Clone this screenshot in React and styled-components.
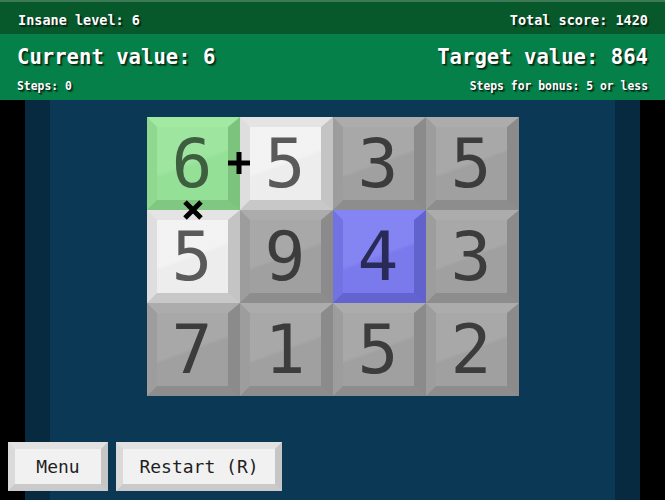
import React from 'react';
import styled, { createGlobalStyle } from 'styled-components';

const GlobalStyle = createGlobalStyle`
    html, body {
        margin: 0;
        padding: 0;
        background: #000;
    }
    body {
        font-family: "DejaVu Sans Mono", "Liberation Mono", monospace;
    }
`;

const palette = {
    grey: { face: '#a3a3a3', top: '#acacac', left: '#9d9d9d', right: '#8b8b8b', bottom: '#8d8d8d', digit: '#3c3c3c' },
    white: { face: '#f2f2f2', top: '#e4e4e4', left: '#dedede', right: '#c4c4c4', bottom: '#c8c8c8', digit: '#5a5a5a' },
    green: { face: '#98e49a', top: '#a2eaa2', left: '#90d890', right: '#7cc47e', bottom: '#80c882', digit: '#3e5e40' },
    blue: { face: '#7c7cf2', top: '#8484f4', left: '#7272e2', right: '#6262cc', bottom: '#6464d0', digit: '#2a2a56' },
};

const cells = [
    { v: 6, kind: 'green' }, { v: 5, kind: 'white' }, { v: 3 }, { v: 5 },
    { v: 5, kind: 'white' }, { v: 9 }, { v: 4, kind: 'blue' }, { v: 3 },
    { v: 7 }, { v: 1 }, { v: 5 }, { v: 2 },
];

const PlusIcon = () => (
    <svg width="24" height="24" viewBox="0 0 24 24">
        <path d="M12 1 V23 M1 12 H23" stroke="#000" strokeWidth="5" />
    </svg>
);

const CrossIcon = () => (
    <svg width="20" height="20" viewBox="0 0 20 20">
        <path d="M2 2 L18 18 M18 2 L2 18" stroke="#000" strokeWidth="5" />
    </svg>
);

const App = () => {
    return (
        <Page>
            <GlobalStyle />
            <TopBar>
                <SmallTitle>Insane level: 6</SmallTitle>
                <SmallTitle>Total score: 1420</SmallTitle>
            </TopBar>
            <Panel>
                <Row>
                    <BigTitle>Current value: 6</BigTitle>
                    <BigTitle>Target value: 864</BigTitle>
                </Row>
                <Row>
                    <Tiny>Steps: 0</Tiny>
                    <Tiny>Steps for bonus: 5 or less</Tiny>
                </Row>
            </Panel>
            <Body>
                <Edge />
                <Field>
                    <Grid>
                        {cells.map((c, i) => (
                            <Tile key={i} $c={palette[c.kind || 'grey']}>
                                <Face $c={palette[c.kind || 'grey']}>{c.v}</Face>
                                {i === 0 && <Operator $x={70} $y={24}><PlusIcon /></Operator>}
                                {i === 0 && <Operator $x={26} $y={73}><CrossIcon /></Operator>}
                            </Tile>
                        ))}
                    </Grid>
                </Field>
                <Edge />
            </Body>
            <Footer>
                <Button $w={100}><ButtonFace>Menu</ButtonFace></Button>
                <Button $w={166}><ButtonFace>Restart (R)</ButtonFace></Button>
            </Footer>
        </Page>
    );
};

const Page = styled.div`
    position: relative;
    width: 665px;
    height: 500px;
    overflow: hidden;
    background: #000;
    display: flex;
    flex-direction: column;
`;

const TopBar = styled.div`
    height: 34px;
    box-sizing: border-box;
    padding: 4px 17px 0 18px;
    background: #07592c;
    border-top: 2px solid #3d7a55;
    display: flex;
    align-items: center;
    justify-content: space-between;
`;

const shadow = `text-shadow: 1px 1px 0 #0a2a15, 2px 2px 1px rgba(0,0,0,0.5);`;

const SmallTitle = styled.span`
    color: #fff;
    font-size: 13.5px;
    font-weight: bold;
    ${shadow}
`;

const Panel = styled.div`
    height: 66px;
    box-sizing: border-box;
    background: #058049;
    padding: 7px 17px 0 17px;
    display: flex;
    flex-direction: column;
`;

const Row = styled.div`
    display: flex;
    justify-content: space-between;
    align-items: center;
`;

const BigTitle = styled.span`
    color: #fff;
    font-size: 20.6px;
    font-weight: bold;
    line-height: 32px;
    ${shadow}
`;

const Tiny = styled.span`
    color: #fff;
    font-size: 11.4px;
    font-weight: bold;
    line-height: 26px;
    ${shadow}
`;

const Body = styled.div`
    flex: 1;
    display: flex;
    padding: 0 25px;
`;

const Edge = styled.div`
    width: 25px;
    background: #082a40;
`;

const Field = styled.div`
    flex: 1;
    background: #0b3955;
    display: flex;
    justify-content: center;
    padding-top: 17px;
`;

const Grid = styled.div`
    display: grid;
    grid-template-columns: repeat(4, 93px);
    grid-template-rows: repeat(3, 93px);
    align-self: flex-start;
`;

const Tile = styled.div`
    position: relative;
    box-sizing: border-box;
    border: 10px solid;
    border-top-color: ${p => p.$c.top};
    border-left-color: ${p => p.$c.left};
    border-right-color: ${p => p.$c.right};
    border-bottom-color: ${p => p.$c.bottom};
    border-right-width: 12px;
    background: ${p => p.$c.face};
`;

const Face = styled.div`
    width: 100%;
    height: 100%;
    display: flex;
    align-items: center;
    justify-content: center;
    font-size: 68px;
    line-height: 1;
    color: ${p => p.$c.digit};
    background: linear-gradient(160deg, rgba(255,255,255,0.06) 0%, rgba(255,255,255,0.06) 48%, rgba(0,0,0,0.02) 52%, rgba(0,0,0,0.02) 100%);
`;

const Operator = styled.div`
    position: absolute;
    z-index: 2;
    left: ${p => p.$x}px;
    top: ${p => p.$y}px;
    line-height: 0;
`;

const Footer = styled.div`
    position: absolute;
    left: 8px;
    top: 442px;
    display: flex;
    gap: 8px;
`;

const Button = styled.div`
    width: ${p => p.$w}px;
    height: 49px;
    box-sizing: border-box;
    border: 7px solid;
    border-top-color: #e2e2e2;
    border-left-color: #dadada;
    border-right-color: #c6c6c6;
    border-bottom-color: #cacaca;
    background: #f1f1f1;
`;

const ButtonFace = styled.div`
    height: 100%;
    display: flex;
    align-items: center;
    justify-content: center;
    font-size: 18px;
    color: #1e1e1e;
`;

export default App;
